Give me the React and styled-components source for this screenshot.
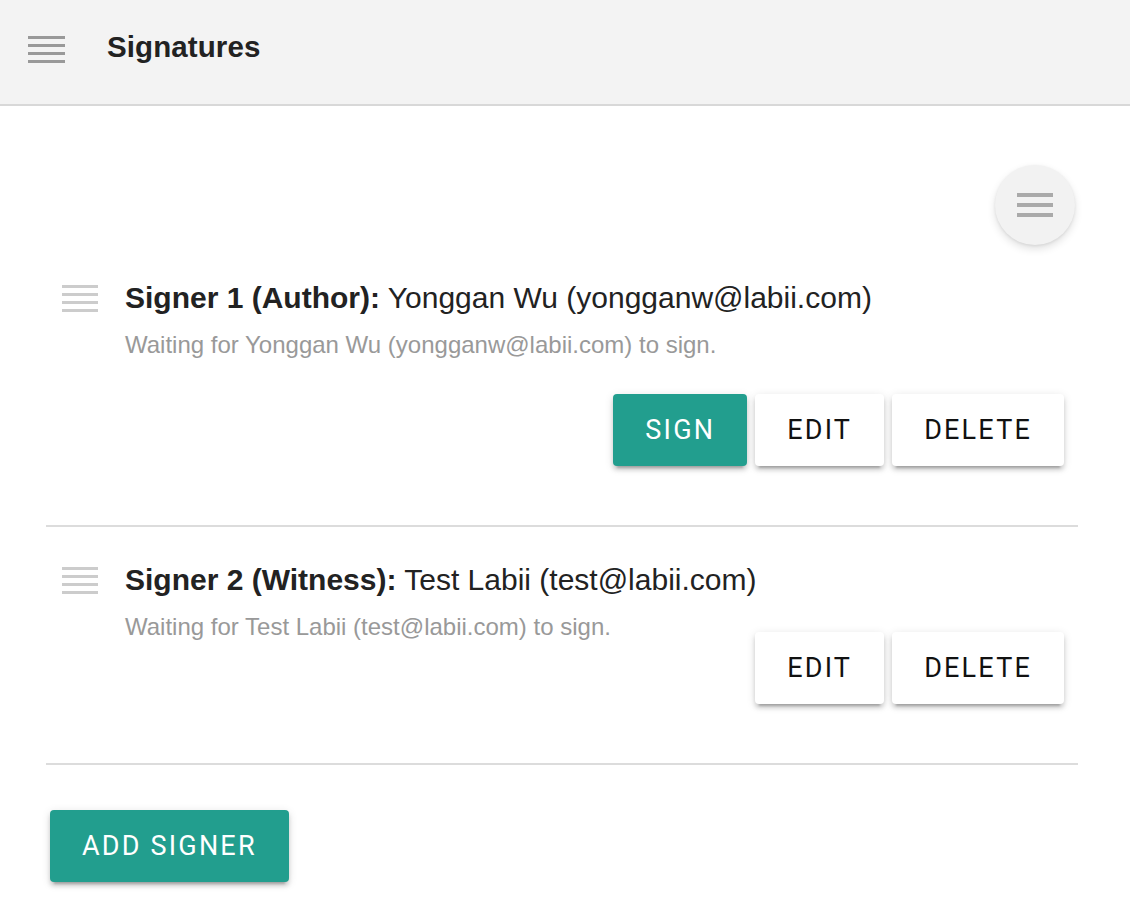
import React from 'react'
import styled, { createGlobalStyle } from 'styled-components'

const GlobalStyle = createGlobalStyle`
  html, body { margin: 0; padding: 0; background: #fff; }
  body { font-family: "Liberation Sans", Arial, Helvetica, sans-serif; color: #222; }
`

const Header = styled.header`
  height: 106px;
  background: #f3f3f3;
  border-bottom: 2px solid #d8d8d8;
  display: flex;
  align-items: center;
  padding: 0 0 6px 28px;
  box-sizing: border-box;
`

const Lines = styled.span`
  display: flex;
  flex-direction: column;
  justify-content: space-between;
  width: ${p => p.$w}px;
  height: ${p => p.$h}px;
  flex-shrink: 0;
  span {
    display: block;
    height: ${p => p.$t}px;
    background: ${p => p.$color};
  }
`

const Burger = ({ w, h, t, color, count }) => (
  <Lines $w={w} $h={h} $t={t} $color={color}>
    {Array.from({ length: count }).map((_, i) => <span key={i} />)}
  </Lines>
)

const Title = styled.h1`
  margin: 0 0 4px 42px;
  font-size: 29.5px;
  font-weight: bold;
  color: #222;
  letter-spacing: 0.1px;
`

const Content = styled.main`
  padding: 59px 52px 0 46px;
`

const TopBar = styled.div`
  display: flex;
  justify-content: flex-end;
  padding-right: 3px;
`

const RoundButton = styled.button`
  width: 80px;
  height: 80px;
  border-radius: 50%;
  border: none;
  background: #f2f2f2;
  display: flex;
  align-items: center;
  justify-content: center;
  box-shadow: 0 4px 8px rgba(0,0,0,0.12), 0 1px 3px rgba(0,0,0,0.08);
  padding: 0;
`

const Row = styled.section`
  display: flex;
  padding: 35px 14px 59px 16px;
  border-bottom: 2px solid #dcdcdc;
`

const Handle = styled.div`
  margin-top: 5px;
  margin-right: 27px;
`

const Body = styled.div`
  flex: 1;
  display: flex;
  flex-direction: column;
`

const SignerTitle = styled.div`
  font-size: 30px;
  line-height: 36px;
  color: #222;
  b { font-weight: bold; }
`

const Status = styled.div`
  margin-top: 15px;
  font-size: 24px;
  line-height: 28px;
  color: #999;
`

const Actions = styled.div`
  display: flex;
  justify-content: flex-end;
  gap: 8px;
  margin-top: ${p => p.$offset}px;
`

const Button = styled.button`
  height: 72px;
  padding: 0 32px;
  border: none;
  border-radius: 4px;
  font-family: Roboto, "Liberation Sans", sans-serif;
  font-size: 27px;
  font-weight: 400;
  letter-spacing: 2.2px;
  text-transform: uppercase;
  background: ${p => (p.$primary ? '#229e8e' : '#fff')};
  color: ${p => (p.$primary ? '#fff' : '#111')};
  box-shadow: 0 6px 2px -4px rgba(0,0,0,0.2), 0 4px 4px 0 rgba(0,0,0,0.14), 0 2px 10px 0 rgba(0,0,0,0.12);
  cursor: pointer;
`

const Footer = styled.div`
  padding: 45px 0 18px 4px;
`

const signers = [
  { label: 'Signer 1 (Author):', name: 'Yonggan Wu (yongganw@labii.com)', canSign: true, offset: 35 },
  { label: 'Signer 2 (Witness):', name: 'Test Labii (test@labii.com)', canSign: false, offset: -9 },
]

export default function App() {
  return (
    <>
      <GlobalStyle />
      <Header>
        <Burger w={37} h={27} t={3} color="#999" count={4} />
        <Title>Signatures</Title>
      </Header>
      <Content>
        <TopBar>
          <RoundButton aria-label="menu">
            <Burger w={36} h={24} t={4} color="#aaa" count={3} />
          </RoundButton>
        </TopBar>
        {signers.map(s => (
          <Row key={s.label}>
            <Handle>
              <Burger w={36} h={27} t={3} color="#ccc" count={4} />
            </Handle>
            <Body>
              <SignerTitle><b>{s.label}</b> {s.name}</SignerTitle>
              <Status>Waiting for {s.name} to sign.</Status>
              <Actions $offset={s.offset}>
                {s.canSign && <Button $primary>Sign</Button>}
                <Button>Edit</Button>
                <Button>Delete</Button>
              </Actions>
            </Body>
          </Row>
        ))}
        <Footer>
          <Button $primary>Add Signer</Button>
        </Footer>
      </Content>
    </>
  )
}
